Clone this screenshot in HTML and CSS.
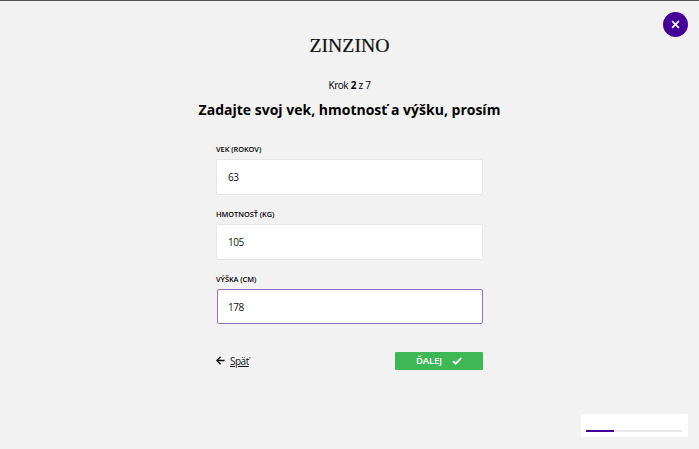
FILE: index.html
```html
<!DOCTYPE html>
<html lang="sk">
<head>
<meta charset="utf-8">
<title>Zinzino</title>
<link rel="stylesheet" href="styles.css">
</head>
<body>
<button class="close" type="button" aria-label="Zavrieť">
  <svg width="9" height="9" viewBox="0 0 9 9"><path d="M1.1 1.1 7.9 7.9M7.9 1.1 1.1 7.9"/></svg>
</button>
<main class="page">
  <div class="logo"><svg width="86" height="24" viewBox="0 0 86 24"><text x="2.5" y="17.6" textLength="80" lengthAdjust="spacingAndGlyphs">ZINZINO</text></svg></div>
  <p class="step">Krok <b>2</b> z 7</p>
  <h1 class="title"><span>Zadajte svoj vek, hmotnosť a výšku, prosím</span></h1>
  <form class="form">
    <div class="field">
      <label class="label" for="age">VEK (ROKOV)</label>
      <input class="input" id="age" value="63">
    </div>
    <div class="field">
      <label class="label" for="weight">HMOTNOSŤ (KG)</label>
      <input class="input" id="weight" value="105">
    </div>
    <div class="field">
      <label class="label" for="height">VÝŠKA (CM)</label>
      <input class="input input-active" id="height" value="178">
    </div>
    <div class="actions">
      <a class="back"><svg width="9" height="9" viewBox="0 0 9 9"><path d="M8.6 4.5H1M4.6.8.9 4.5l3.7 3.7"/></svg><span>Späť</span></a>
      <button class="next" type="button"><span>ĎALEJ</span><svg width="10" height="8" viewBox="0 0 10 8"><path d="M1 4.1 3.7 6.7 9.1 1.2"/></svg></button>
    </div>
  </form>
</main>
<div class="progress"><div class="track"><div class="bar"></div></div></div>
</body>
</html>
```
FILE: styles.css
```css
* {
  box-sizing: border-box;
}

body {
  margin: 0;
  height: 449px;
  overflow: hidden;
  background: #f2f2f2;
  border-top: 1px solid #555;
  color: #000;
  font-family: "Open Sans", sans-serif;
  font-size: 10px;
  letter-spacing: -0.5px;
  word-spacing: 0.5px;
}

svg {
  display: block;
  fill: none;
  stroke: currentColor;
}

.close {
  position: absolute;
  top: 12px;
  right: 11px;
  width: 25px;
  height: 25px;
  padding: 0;
  border: 0;
  border-radius: 50%;
  background: #460099;
  color: #fff;
  display: grid;
  place-items: center;
}

.close svg {
  stroke-width: 1.6;
}

.page {
  display: flex;
  flex-direction: column;
  align-items: center;
  padding-top: 33px;
}

.logo svg {
  fill: #111;
  stroke: #111;
  stroke-width: 0.2;
  font: 18px "Liberation Serif", serif;
  letter-spacing: 0;
  word-spacing: 0;
}

.step {
  margin: 20px 0 0;
  line-height: 14px;
}

.title {
  margin: 7px 0 0;
  font-size: 14px;
  line-height: 22px;
  font-weight: 700;
  letter-spacing: 0;
  word-spacing: 0;
  white-space: nowrap;
}

.form {
  width: 267px;
  margin-top: 23px;
}

.field {
  height: 65px;
}

.label {
  display: block;
  height: 15px;
  line-height: 11px;
  font-size: 7.4px;
  font-weight: 600;
  letter-spacing: -0.05px;
  word-spacing: 0;
}

.input {
  display: block;
  width: 100%;
  height: 36px;
  padding: 0 11px;
  border: 1px solid #e7e7e7;
  border-radius: 1px;
  background: #fff;
  color: #111;
  font: 10px "Open Sans", sans-serif;
  letter-spacing: -0.5px;
  outline: 0;
}

.input-active {
  width: 266px;
  height: 35px;
  margin-left: 1px;
  padding-left: 10px;
  border-color: #9470c4;
  border-radius: 2px;
}

.actions {
  display: flex;
  justify-content: space-between;
  align-items: center;
  margin-top: 13px;
  height: 18px;
}

.back {
  display: flex;
  align-items: center;
  gap: 5px;
  margin-top: -1px;
  color: #111;
}

.back span {
  text-decoration: underline;
}

.back svg {
  stroke-width: 1.3;
}

.next {
  display: flex;
  align-items: center;
  justify-content: center;
  gap: 10px;
  width: 88px;
  height: 18px;
  padding: 0 0 1px;
  border: 0;
  border-radius: 1px;
  background: #3eb755;
  color: #fff;
  font: 600 9.6px "Open Sans", sans-serif;
  letter-spacing: -0.15px;
}

.next svg {
  stroke-width: 1.8;
}

.progress {
  position: absolute;
  right: 11px;
  bottom: 12px;
  width: 107px;
  height: 23px;
  padding: 16px 6px 0 5px;
  border-radius: 1px;
  background: #fff;
}

.track {
  height: 2px;
  background: #ebebeb;
}

.bar {
  width: 28px;
  height: 2px;
  background: #460099;
}
```
